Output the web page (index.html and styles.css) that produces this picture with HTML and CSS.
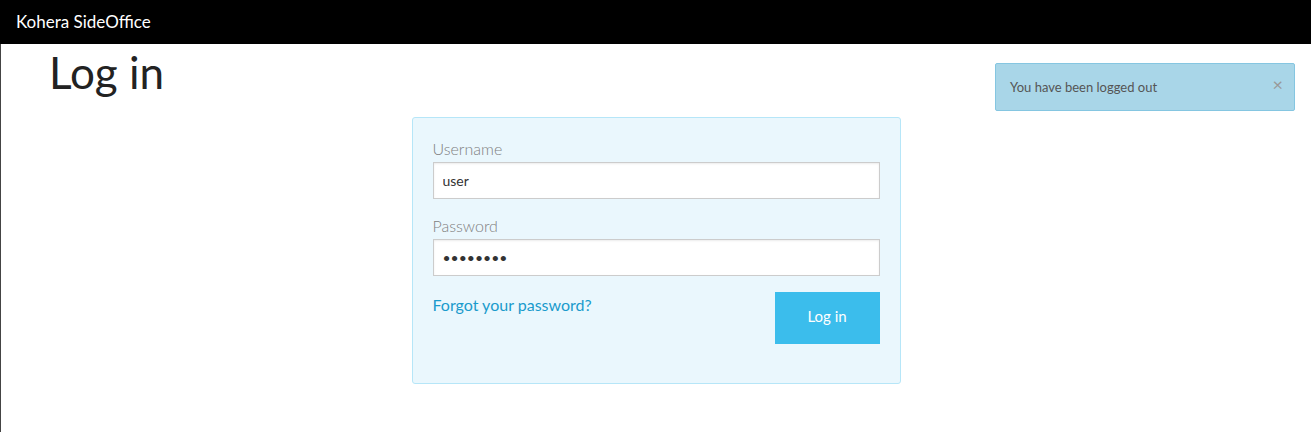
FILE: index.html
```html
<!DOCTYPE html>
<html lang="en">
<head>
<meta charset="utf-8">
<title>Log in - Kohera SideOffice</title>
<link rel="stylesheet" href="styles.css">
</head>
<body>
<header class="topbar">Kohera SideOffice</header>
<div class="page">
  <h1 class="title">Log in</h1>
  <div class="alert">
    <span class="alert-text">You have been logged out</span>
    <span class="alert-close">&times;</span>
  </div>
  <form class="panel">
    <div class="field">
      <label class="label" for="u">Username</label>
      <input class="input" id="u" type="text" value="user">
    </div>
    <div class="field">
      <label class="label" for="p">Password</label>
      <input class="input" id="p" type="password" value="password">
    </div>
    <div class="actions">
      <a class="forgot" href="#">Forgot your password?</a>
      <button class="btn" type="button">Log in</button>
    </div>
  </form>
</div>
</body>
</html>
```

FILE: styles.css
```css
* { box-sizing: border-box; }
html, body { margin: 0; padding: 0; height: 100%; }
body {
  font-family: Lato, "Open Sans", sans-serif;
  background: #fff;
  color: #222;
}
.topbar {
  background: #000;
  color: #fff;
  height: 44px;
  line-height: 44px;
  padding-left: 16px;
  font-size: 17px;
}
.page {
  position: relative;
  border-left: 1px solid #444;
  min-height: calc(100% - 44px);
  padding-top: 1px;
}
.title {
  margin: 3px 0 0 48px;
  font-size: 44px;
  font-weight: 400;
  line-height: 48px;
  color: #222;
}
.alert {
  position: absolute;
  top: 19px;
  right: 16px;
  width: 300px;
  height: 48px;
  background: #a9d6e8;
  border: 1px solid #85c6e1;
  border-radius: 2px;
  display: flex;
  align-items: center;
  justify-content: space-between;
  padding: 0 11px 0 14px;
  font-size: 13px;
  color: #555;
}
.alert-close {
  color: #999;
  font-size: 18px;
  line-height: 1;
  margin-top: -6px;
}
.panel {
  width: 489px;
  margin: 21px auto 0;
  background: #eaf7fd;
  border: 1px solid #b6e6f8;
  border-radius: 3px;
  padding: 21px 20px 39px;
}
.field { margin-bottom: 17px; }
.label {
  display: block;
  font-size: 16px;
  font-weight: 300;
  color: #808080;
  line-height: 20px;
  margin-bottom: 3px;
}
.input {
  display: block;
  width: 100%;
  height: 37px;
  border: 1px solid #ccc;
  background: #fff;
  box-shadow: inset 0 1px 2px rgba(0,0,0,0.08);
  padding: 0 9px;
  font-family: Lato, sans-serif;
  font-size: 14px;
  color: #333;
  outline: none;
}
.actions {
  display: flex;
  justify-content: space-between;
  align-items: flex-start;
  margin-top: -1px;
}
.forgot {
  color: #1a9bcc;
  text-decoration: none;
  font-size: 16px;
  line-height: 20px;
  margin-top: 3px;
}
.btn {
  width: 105px;
  height: 52px;
  border: 0;
  padding: 0 0 4px;
  background: #3bbdec;
  color: #fff;
  font-family: Lato, sans-serif;
  font-size: 15px;
  cursor: pointer;
}
```
